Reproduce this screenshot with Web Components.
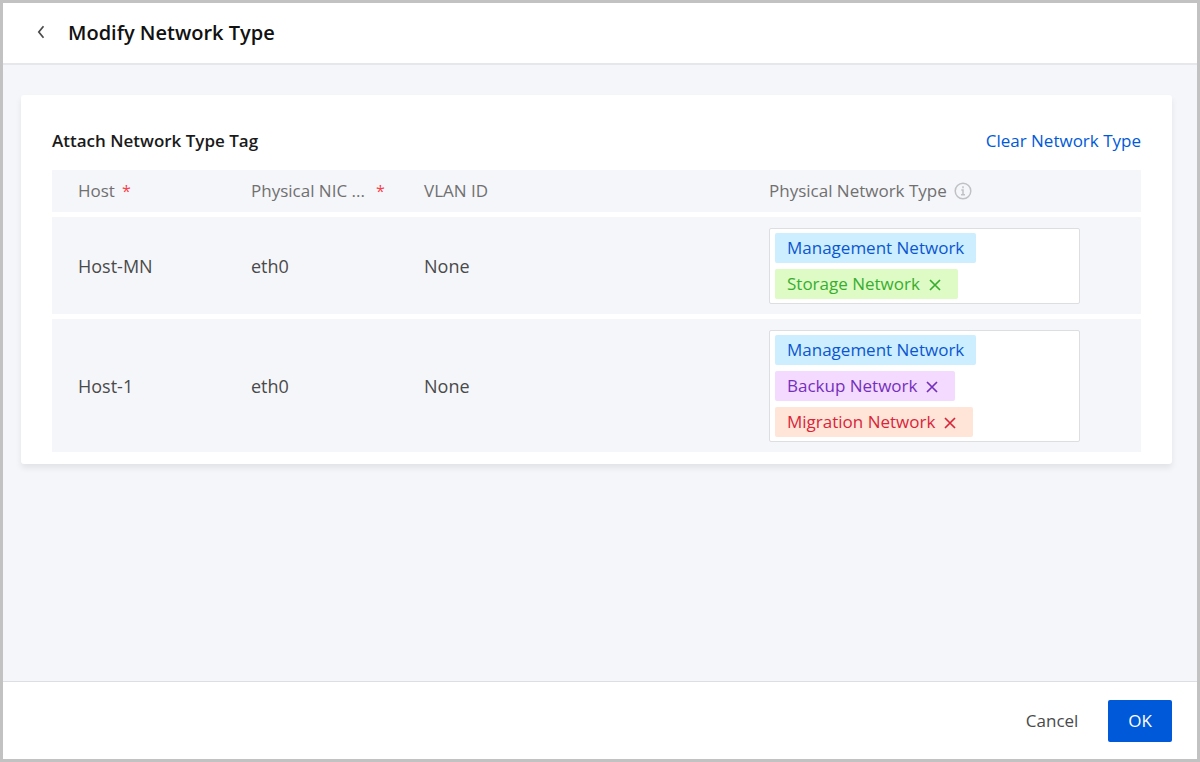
<!DOCTYPE html>
<html lang="en">
<head>
<meta charset="utf-8">
<meta name="viewport" content="width=device-width, initial-scale=1">
<title>Modify Network Type</title>
<style>
    html, body {
        height: 100%;
        margin: 0;
    }

    body {
        --page: #f5f6fa;
        --line: #dcdee2;
        --primary: #0059d8;
        font-family: "Segoe UI", "Open Sans", "Noto Sans", sans-serif;
        font-size: 17px;
        line-height: 24px;
        color: #4a4a4a;
    }
</style>
</head>
<body>
<app-page>
    <page-header slot="header">Modify Network Type</page-header>
    <content-card>
        <span slot="title">Attach Network Type Tag</span>
        <a slot="action" href="#clear">Clear Network Type</a>
        <network-table></network-table>
    </content-card>
    <page-footer slot="footer"></page-footer>
</app-page>

<script>
class AppPage extends HTMLElement {
    constructor() {
        super();
        this.attachShadow({mode: 'open'});
        this.shadowRoot.innerHTML = `
            <style>
                :host {
                    display: flex;
                    flex-direction: column;
                    box-sizing: border-box;
                    min-height: 100%;
                    border: 3px solid #c2c2c2;
                    background: var(--page);
                }

                main {
                    flex: 1;
                    padding: 30px 25px 30px 18px;
                }
            </style>
            <slot name="header"></slot>
            <main><slot></slot></main>
            <slot name="footer"></slot>`;
    }
}
customElements.define('app-page', AppPage);

class PageHeader extends HTMLElement {
    constructor() {
        super();
        this.attachShadow({mode: 'open'});
        this.shadowRoot.innerHTML = `
            <style>
                :host {
                    display: flex;
                    align-items: center;
                    gap: 15px;
                    height: 60px;
                    padding: 0 25px;
                    background: #fff;
                    border-bottom: 2px solid #e6e7eb;
                }

                button {
                    display: flex;
                    padding: 4px;
                    border: 0;
                    background: none;
                    color: #4a4a4a;
                    cursor: pointer;
                }

                h1 {
                    margin: 0;
                    font-size: 20px;
                    line-height: 28px;
                    font-weight: 600;
                    color: #111;
                }
            </style>
            <button type="button" aria-label="Back">
                <svg width="17" height="18" viewBox="0 0 17 18" fill="none" stroke="currentColor" stroke-width="1.7">
                    <path d="M11.5 2.2 6.8 8l4.7 5.8"/>
                </svg>
            </button>
            <h1><slot></slot></h1>`;
    }
}
customElements.define('page-header', PageHeader);

class ContentCard extends HTMLElement {
    constructor() {
        super();
        this.attachShadow({mode: 'open'});
        this.shadowRoot.innerHTML = `
            <style>
                :host {
                    display: block;
                    padding: 34px 31px 7px;
                    background: #fff;
                    border-radius: 3px;
                    box-shadow: 0 4px 6px rgba(0, 0, 0, .08);
                }

                header {
                    display: flex;
                    justify-content: space-between;
                    align-items: center;
                    margin-bottom: 12px;
                }

                h2 {
                    margin: 0;
                    font-size: 17px;
                    line-height: 24px;
                    font-weight: 600;
                    color: #1a1a1a;
                }

                ::slotted(a) {
                    color: var(--primary);
                    text-decoration: none;
                }
            </style>
            <header>
                <h2><slot name="title"></slot></h2>
                <slot name="action"></slot>
            </header>
            <slot></slot>`;
    }
}
customElements.define('content-card', ContentCard);

class NetworkTag extends HTMLElement {
    constructor() {
        super();
        this.attachShadow({mode: 'open'});
    }

    connectedCallback() {
        const close = this.hasAttribute('closable') ? `
            <button type="button" aria-label="Remove">
                <svg width="12" height="12" viewBox="0 0 12 12" stroke="currentColor" stroke-width="1.7">
                    <path d="M1 1l10 10M11 1L1 11"/>
                </svg>
            </button>` : '';

        this.shadowRoot.innerHTML = `
            <style>
                :host {
                    display: inline-flex;
                    align-items: center;
                    height: 30px;
                    padding: 0 12px;
                    border-radius: 2px;
                    white-space: nowrap;
                    background: #cceeff;
                    color: #0b56d0;
                }

                :host([color="green"]) {
                    background: #defac5;
                    color: #38ae2f;
                }

                :host([color="purple"]) {
                    background: #f3dafe;
                    color: #752fbd;
                }

                :host([color="red"]) {
                    background: #ffe4d8;
                    color: #d9253a;
                }

                button {
                    display: flex;
                    margin: 2px 0 0 4px;
                    padding: 5px;
                    border: 0;
                    background: none;
                    color: inherit;
                    cursor: pointer;
                }
            </style>
            <slot></slot>${close}`;
    }
}
customElements.define('network-tag', NetworkTag);

class TagSelect extends HTMLElement {
    constructor() {
        super();
        this.attachShadow({mode: 'open'});
        this.shadowRoot.innerHTML = `
            <style>
                :host {
                    display: flex;
                    flex-direction: column;
                    align-items: flex-start;
                    gap: 6px;
                    padding: 4px 5px;
                    border: 1px solid var(--line);
                    border-radius: 2px;
                    background: #fff;
                }
            </style>
            <slot></slot>`;
    }
}
customElements.define('tag-select', TagSelect);

class NetworkTable extends HTMLElement {
    constructor() {
        super();
        this.attachShadow({mode: 'open'});
        this.shadowRoot.innerHTML = `
            <style>
                :host {
                    display: block;
                }

                table {
                    width: 100%;
                    table-layout: fixed;
                    border-spacing: 0 5px;
                }

                .short {
                    width: 173px;
                }

                .types {
                    width: 398px;
                }

                th, td {
                    box-sizing: border-box;
                    padding: 11px 0 10px 26px;
                    text-align: left;
                    background: var(--page);
                }

                th {
                    height: 42px;
                    padding: 9px 0 9px 26px;
                    font-weight: 400;
                    color: #707070;
                    white-space: nowrap;
                }

                td {
                    font-size: 18px;
                }

                td:last-child {
                    padding-right: 61px;
                    font-size: 17px;
                }

                .head {
                    display: flex;
                    align-items: center;
                    gap: 7px;
                }

                .clipped {
                    gap: 11px;
                }

                .required {
                    font-size: 16px;
                    color: #f5414a;
                }

                svg {
                    color: #bfc1c5;
                }
            </style>
            <table>
                <colgroup>
                    <col class="short"><col class="short"><col><col class="types">
                </colgroup>
                <thead>
                    <tr>
                        <th scope="col"><div class="head">Host <span class="required">*</span></div></th>
                        <th scope="col"><div class="head clipped">Physical NIC ... <span class="required">*</span></div></th>
                        <th scope="col">VLAN ID</th>
                        <th scope="col">
                            <div class="head">Physical Network Type
                                <svg width="18" height="18" viewBox="0 0 18 18" fill="none" stroke="currentColor" stroke-width="1.5">
                                    <circle cx="9" cy="9" r="7.8"/>
                                    <path d="M9 4.3v2M7.3 8H9v4.6M7 12.8h4"/>
                                </svg>
                            </div>
                        </th>
                    </tr>
                </thead>
                <tbody>
                    <tr>
                        <td>Host-MN</td>
                        <td>eth0</td>
                        <td>None</td>
                        <td>
                            <tag-select>
                                <network-tag>Management Network</network-tag>
                                <network-tag color="green" closable>Storage Network</network-tag>
                            </tag-select>
                        </td>
                    </tr>
                    <tr>
                        <td>Host-1</td>
                        <td>eth0</td>
                        <td>None</td>
                        <td>
                            <tag-select>
                                <network-tag>Management Network</network-tag>
                                <network-tag color="purple" closable>Backup Network</network-tag>
                                <network-tag color="red" closable>Migration Network</network-tag>
                            </tag-select>
                        </td>
                    </tr>
                </tbody>
            </table>`;
    }
}
customElements.define('network-table', NetworkTable);

class PageFooter extends HTMLElement {
    constructor() {
        super();
        this.attachShadow({mode: 'open'});
        this.shadowRoot.innerHTML = `
            <style>
                :host {
                    display: flex;
                    justify-content: flex-end;
                    align-items: center;
                    gap: 10px;
                    padding: 18px 25px 17px;
                    background: #fff;
                    border-top: 1px solid var(--line);
                }

                button {
                    height: 42px;
                    padding: 0 20px;
                    border: 0;
                    border-radius: 2px;
                    background: none;
                    font: inherit;
                    color: inherit;
                    cursor: pointer;
                }

                .ok {
                    background: var(--primary);
                    color: #fff;
                }
            </style>
            <button type="button">Cancel</button>
            <button type="button" class="ok">OK</button>`;
    }
}
customElements.define('page-footer', PageFooter);
</script>
</body>
</html>
